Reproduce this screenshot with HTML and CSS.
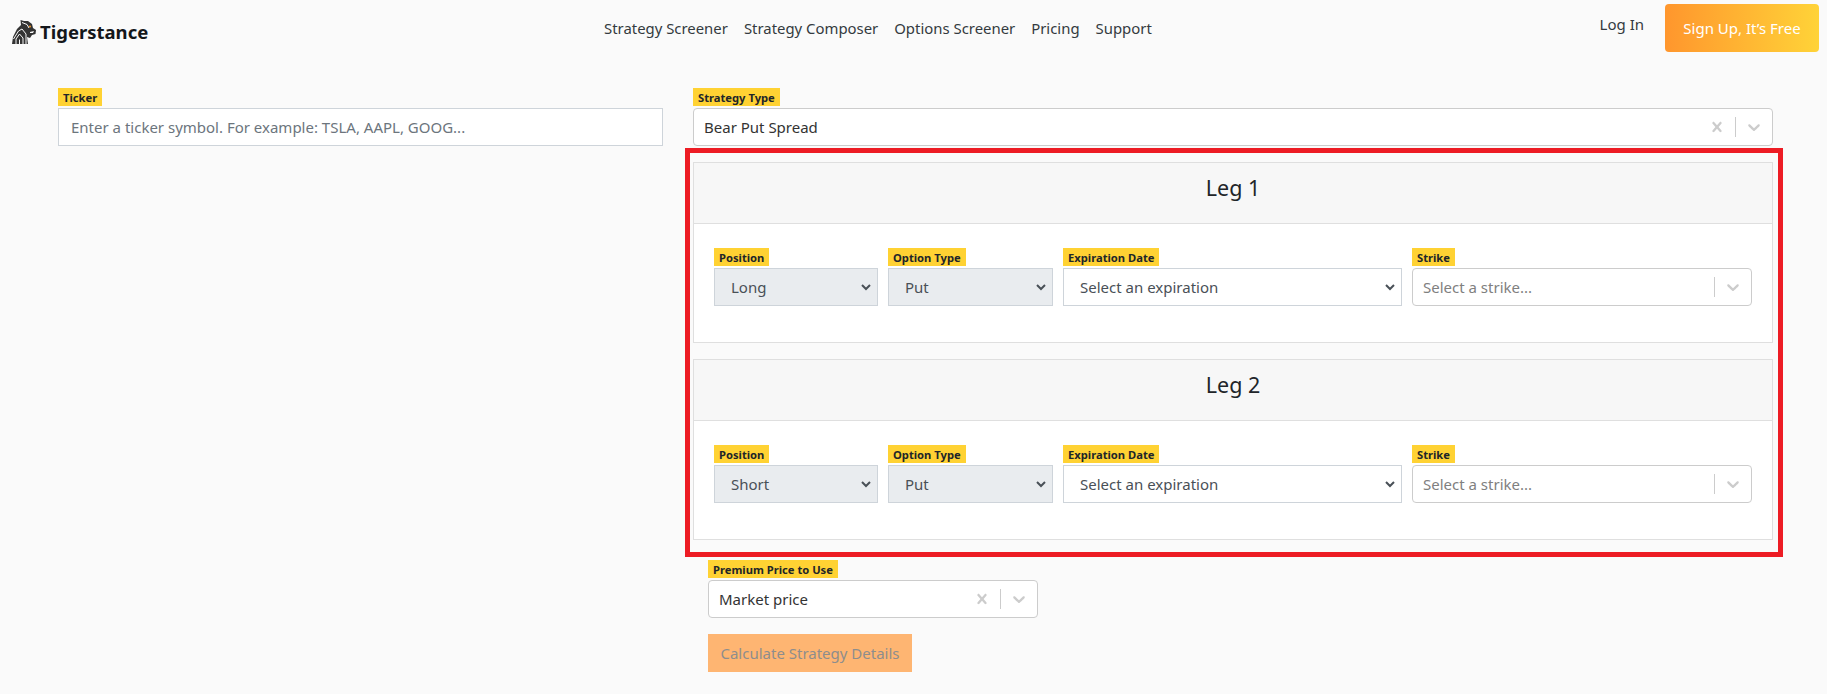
FILE: index.html
```html
<!DOCTYPE html>
<html lang="en">
<head>
    <meta charset="UTF-8">
    <meta name="viewport" content="width=device-width, initial-scale=1.0">
    <title>Tigerstance</title>
    <link rel="stylesheet" href="styles.css">
</head>
<body>
    <svg class="sprites" width="0" height="0">
        <symbol id="icon-clear" viewBox="0 0 20 20"><path d="M14.348 14.849c-0.469 0.469-1.229 0.469-1.697 0l-2.651-3.030-2.651 3.029c-0.469 0.469-1.229 0.469-1.697 0-0.469-0.469-0.469-1.229 0-1.697l2.758-3.15-2.759-3.152c-0.469-0.469-0.469-1.228 0-1.697s1.228-0.469 1.697 0l2.652 3.031 2.651-3.031c0.469-0.469 1.228-0.469 1.697 0s0.469 1.229 0 1.697l-2.758 3.152 2.758 3.15c0.469 0.469 0.469 1.229 0 1.698z"/></symbol>
        <symbol id="icon-down" viewBox="0 0 20 20"><path d="M4.516 7.548c0.436-0.446 1.043-0.481 1.576 0l3.908 3.747 3.908-3.747c0.533-0.481 1.141-0.446 1.574 0 0.436 0.445 0.408 1.197 0 1.615-0.406 0.418-4.695 4.502-4.695 4.502-0.217 0.223-0.502 0.335-0.787 0.335s-0.57-0.112-0.789-0.335c0 0-4.287-4.084-4.695-4.502s-0.436-1.17 0-1.615z"/></symbol>
    </svg>

    <header class="topbar">
        <a class="brand" href="#">
            <svg class="brand-logo" viewBox="0 0 24 24">
                <path fill="#333" d="M0 24 L1 17 L5 9 L9 5 L8.500 0 L12 1 L16 1 L20 4 L21 8 L24 10 L23.500 14 L20 15 L18 18 L15 17 L16 24 Z"/>
                <path fill="none" stroke="#fafafa" stroke-width="1" d="M4 24 V19 L7.500 14 L11 18 V24 M7.500 24 V19.500 M1.500 19 L6.500 11 L10 9 L14 14 V24 M10 2.500 L15 4.500 L17 8"/>
                <path fill="#fafafa" d="M18 12 L22 11 L21 13 L18 13 Z"/>
                <circle cx="18" cy="6.500" r="1" fill="#f7931e"/>
            </svg>
            <span>Tigerstance</span>
        </a>
        <nav class="nav-links">
            <a href="#">Strategy Screener</a>
            <a href="#">Strategy Composer</a>
            <a href="#">Options Screener</a>
            <a href="#">Pricing</a>
            <a href="#">Support</a>
        </nav>
        <div class="nav-actions">
            <a class="login" href="#">Log In</a>
            <a class="signup" href="#">Sign Up, It’s Free</a>
        </div>
    </header>

    <main class="composer">
        <section class="ticker-col">
            <label class="tag">Ticker</label>
            <input class="field" type="text" placeholder="Enter a ticker symbol. For example: TSLA, AAPL, GOOG...">
        </section>

        <section class="strategy-col">
            <label class="tag">Strategy Type</label>
            <div class="combo">
                <span class="combo-value">Bear Put Spread</span>
                <svg class="combo-icon"><use href="#icon-clear"/></svg>
                <i class="combo-sep"></i>
                <svg class="combo-icon"><use href="#icon-down"/></svg>
            </div>

            <div class="legs">
                <div class="card">
                    <h2 class="card-header">Leg 1</h2>
                    <div class="card-body">
                        <div>
                            <label class="tag">Position</label>
                            <select class="field pick" disabled><option>Long</option></select>
                        </div>
                        <div>
                            <label class="tag">Option Type</label>
                            <select class="field pick" disabled><option>Put</option></select>
                        </div>
                        <div>
                            <label class="tag">Expiration Date</label>
                            <select class="field pick"><option>Select an expiration</option></select>
                        </div>
                        <div>
                            <label class="tag">Strike</label>
                            <div class="combo">
                                <span class="combo-value placeholder">Select a strike...</span>
                                <i class="combo-sep"></i>
                                <svg class="combo-icon"><use href="#icon-down"/></svg>
                            </div>
                        </div>
                    </div>
                </div>

                <div class="card">
                    <h2 class="card-header">Leg 2</h2>
                    <div class="card-body">
                        <div>
                            <label class="tag">Position</label>
                            <select class="field pick" disabled><option>Short</option></select>
                        </div>
                        <div>
                            <label class="tag">Option Type</label>
                            <select class="field pick" disabled><option>Put</option></select>
                        </div>
                        <div>
                            <label class="tag">Expiration Date</label>
                            <select class="field pick"><option>Select an expiration</option></select>
                        </div>
                        <div>
                            <label class="tag">Strike</label>
                            <div class="combo">
                                <span class="combo-value placeholder">Select a strike...</span>
                                <i class="combo-sep"></i>
                                <svg class="combo-icon"><use href="#icon-down"/></svg>
                            </div>
                        </div>
                    </div>
                </div>
            </div>

            <div class="premium">
                <label class="tag">Premium Price to Use</label>
                <div class="combo">
                    <span class="combo-value">Market price</span>
                    <svg class="combo-icon"><use href="#icon-clear"/></svg>
                    <i class="combo-sep"></i>
                    <svg class="combo-icon"><use href="#icon-down"/></svg>
                </div>
                <button class="calc" disabled>Calculate Strategy Details</button>
            </div>
        </section>
    </main>
</body>
</html>
```

FILE: styles.css
```css
* {
    box-sizing: border-box;
}
body {
    margin: 0;
    height: 694px;
    overflow: hidden;
    font-family: "Noto Sans", "Open Sans", sans-serif;
    font-size: 15px;
    background-color: #fafafa;
    color: #212529;
}
a {
    text-decoration: none;
    color: inherit;
}
.sprites {
    position: absolute;
}

/* top bar */
.topbar {
    display: flex;
    align-items: flex-start;
    height: 88px;
    padding: 4px 8px 0 12px;
}
.brand {
    display: flex;
    align-items: center;
    gap: 4px;
    width: 592px;
    margin-top: 15px;
    font-size: 18.5px;
    font-weight: 700;
    color: #14171a;
}
.brand-logo {
    width: 24px;
    height: 24px;
}
.nav-links {
    display: flex;
    gap: 16px;
    margin-top: 14px;
    font-size: 14.9px;
    color: #343a40;
}
.nav-actions {
    display: flex;
    align-items: flex-start;
    margin-left: auto;
}
.login {
    margin: 10px 21px 0 0;
    color: #343a40;
}
.signup {
    display: block;
    width: 154px;
    height: 48px;
    line-height: 48px;
    text-align: center;
    border-radius: 4px;
    color: #fff;
    background: linear-gradient(90deg, #ff962d, #ffd338);
}

/* form */
.composer {
    display: flex;
    align-items: flex-start;
    padding-left: 58px;
}
.ticker-col {
    width: 605px;
    margin-right: 30px;
}
.strategy-col {
    width: 1080px;
}
.tag {
    display: block;
    width: fit-content;
    height: 18px;
    line-height: 19px;
    padding: 0 5px;
    margin-bottom: 2px;
    font-size: 11.2px;
    font-weight: 700;
    background-color: #ffd233;
    color: #212529;
}
.field {
    display: block;
    width: 100%;
    height: 38px;
    padding: 0 12px;
    font-family: inherit;
    font-size: 15px;
    color: #495057;
    background-color: #fff;
    border: 1px solid #ced4da;
    border-radius: 0;
    outline: none;
}
.field::placeholder {
    color: #6c757d;
}
.pick {
    appearance: none;
    padding-left: 16px;
    background-image: url("data:image/svg+xml,%3Csvg xmlns='http://www.w3.org/2000/svg' viewBox='0 0 12 8'%3E%3Cpath fill='none' stroke='%23495057' stroke-width='2' d='M2 2l4 4 4-4'/%3E%3C/svg%3E");
    background-repeat: no-repeat;
    background-position: right 5px center;
    background-size: 12px 8px;
    opacity: 1;
}
.pick:disabled {
    background-color: #e9ecef;
}
.combo {
    display: flex;
    align-items: center;
    height: 38px;
    padding: 0 8px 0 10px;
    background-color: #fff;
    border: 1px solid #ccc;
    border-radius: 4px;
}
.combo-value {
    flex: 1;
    color: #333;
}
.placeholder {
    color: #808080;
}
.combo-icon {
    width: 20px;
    height: 20px;
    fill: #ccc;
}
.combo-sep {
    width: 1px;
    height: 20px;
    margin: 0 8px;
    background-color: #ccc;
}

/* red box round the legs */
.legs {
    margin: 2px -10px 3px -8px;
    padding: 9px 5px 12px 3px;
    border: 5px solid #ed1c24;
}
.card {
    background-color: #fff;
    border: 1px solid #dfdfdf;
}
.card + .card {
    margin-top: 16px;
}
.card-header {
    height: 61px;
    line-height: 50px;
    margin: 0;
    text-align: center;
    font-size: 21.5px;
    font-weight: 400;
    background-color: #f7f7f7;
    border-bottom: 1px solid #dfdfdf;
}
.card-body {
    display: grid;
    grid-template-columns: 164px 165px 339px 340px;
    gap: 10px;
    height: 118px;
    padding: 24px 20px 0;
}

.premium {
    width: 330px;
    margin-left: 15px;
}
.calc {
    display: block;
    width: 204px;
    height: 38px;
    margin-top: 16px;
    padding: 0;
    font-family: inherit;
    font-size: 15px;
    color: #8d8d8d;
    background-color: #feb572;
    border: none;
}
```
